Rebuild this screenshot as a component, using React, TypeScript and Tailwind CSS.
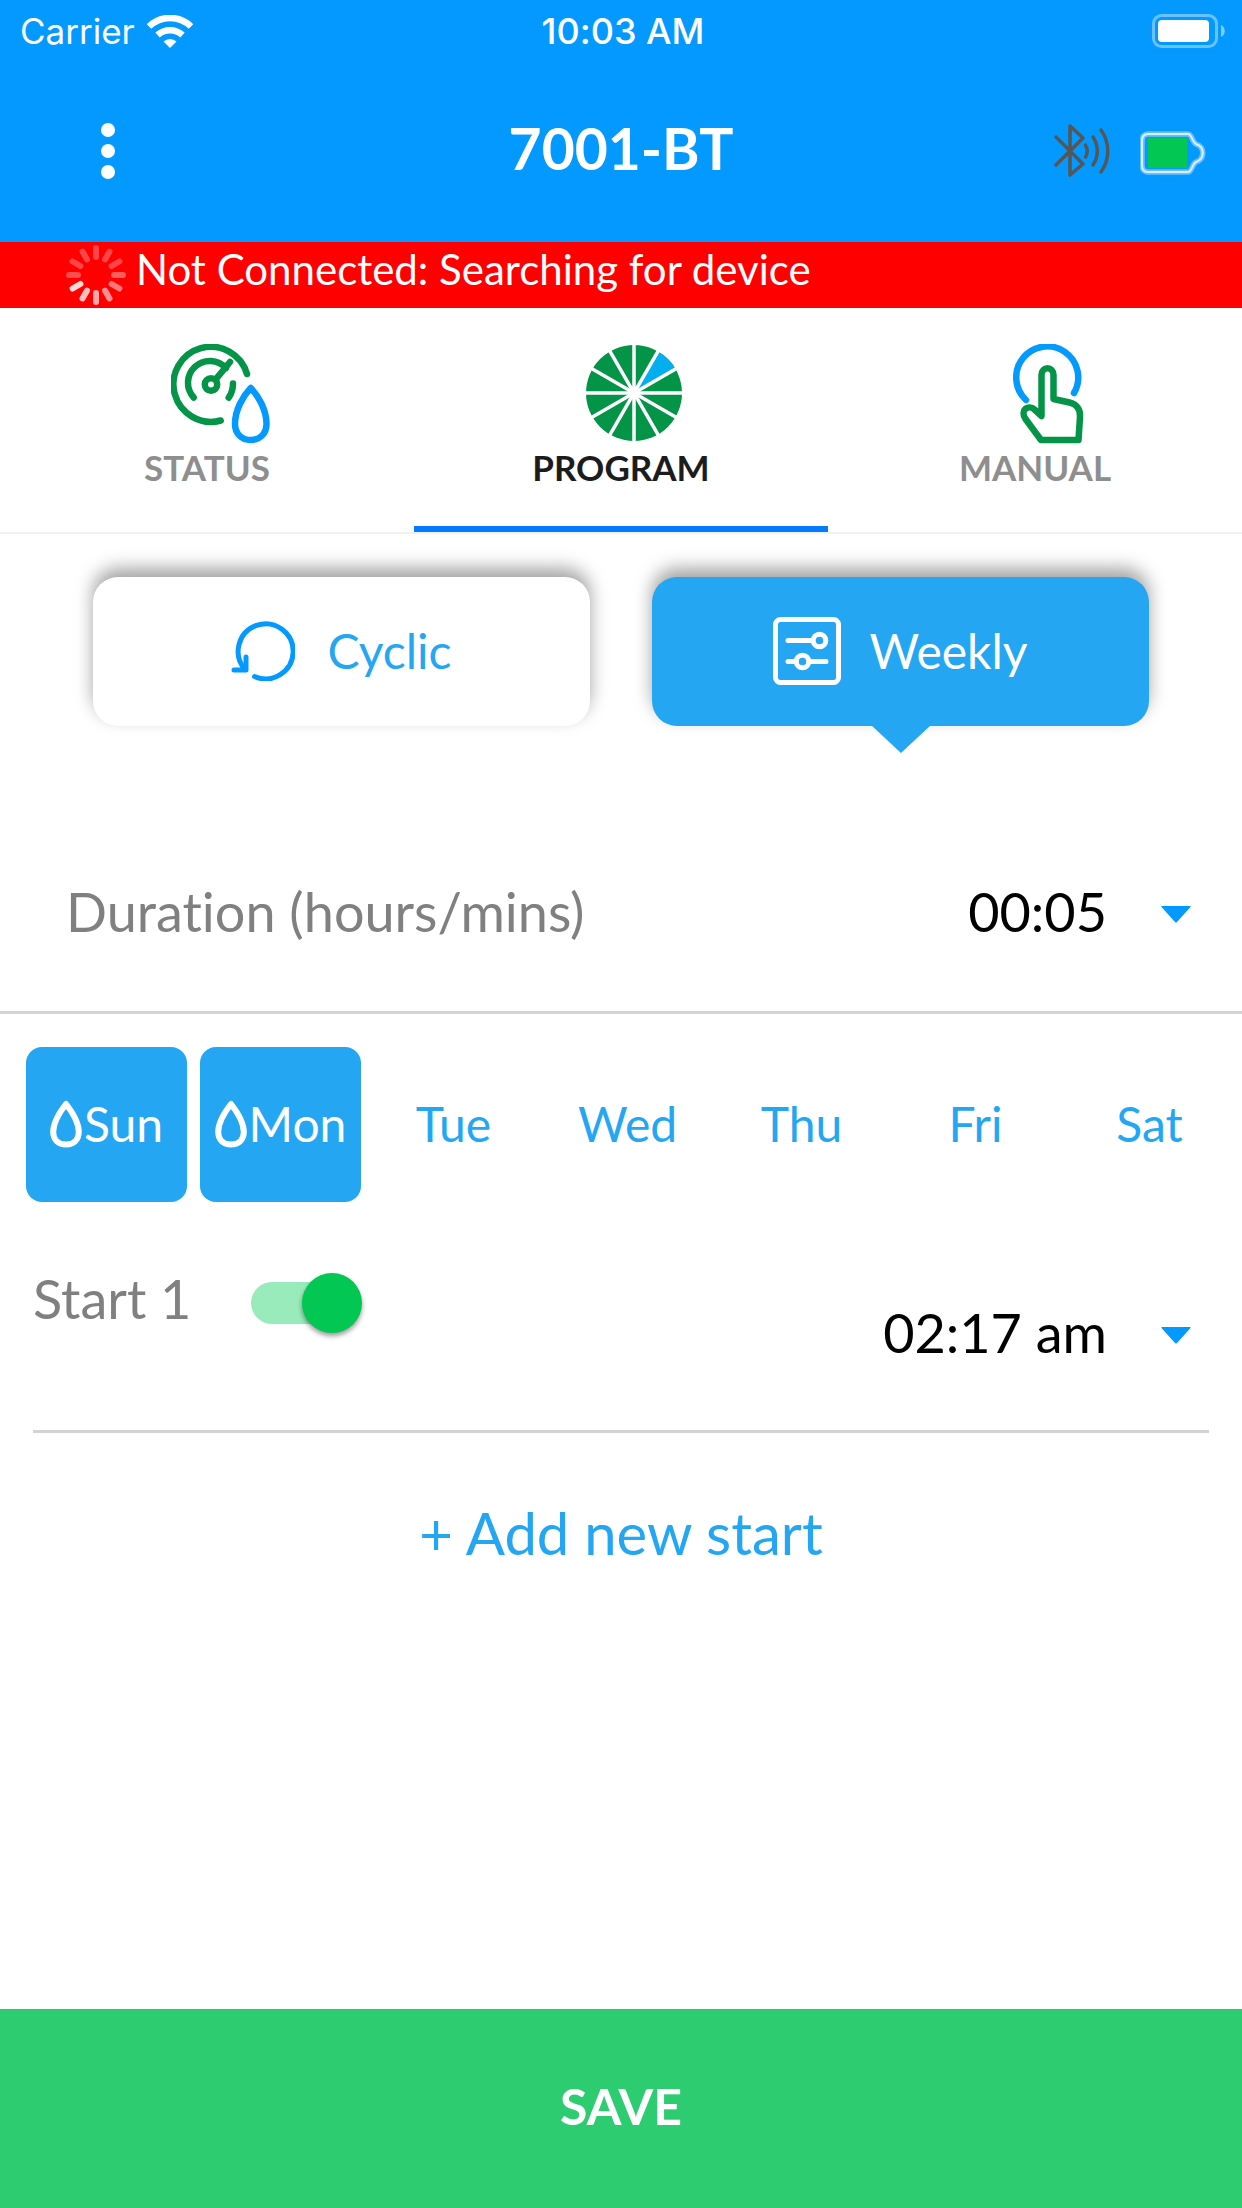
import { useState } from "react";
import type { ReactNode } from "react";

const WEEK = ["Sun", "Mon", "Tue", "Wed", "Thu", "Fri", "Sat"];

function WifiIcon() {
  return (
    <svg viewBox="0 0 46 33" className="h-[33px] w-[46px]" fill="none" stroke="#fff" aria-hidden="true">
      <path d="M2 11.5a30 30 0 0 1 42 0" strokeWidth="6.5" />
      <path d="M10.5 20a18.5 18.5 0 0 1 25 0" strokeWidth="6.5" />
      <path d="M16.500 26.500a9.500 9.500 0 0 1 13 0L23 33z" fill="#fff" stroke="none" />
    </svg>
  );
}

function PhoneBattery() {
  return (
    <svg viewBox="0 0 74 34" className="h-[34px] w-[74px]" aria-hidden="true">
      <rect x="1.500" y="1.500" width="63" height="31" rx="8" fill="none" stroke="#fff" strokeOpacity=".4" strokeWidth="3" />
      <rect x="6" y="6" width="51" height="22" rx="4" fill="#fff" />
      <path d="M69 11c5 2 5 10 0 12z" fill="#fff" fillOpacity=".5" />
    </svg>
  );
}

function BluetoothIcon() {
  return (
    <svg viewBox="0 0 58 54" className="h-[54px] w-[58px]" fill="none" stroke="#565656" strokeWidth="3.500" strokeLinecap="round" strokeLinejoin="round" aria-hidden="true">
      <path d="M2 13l27 27-13 11V2l13 12L2 41" />
      <path d="M31.500 21a12 12 0 0 1 0 12M39 13a25 25 0 0 1 0 28M47 6a36 36 0 0 1 0 42" />
    </svg>
  );
}

function DeviceBattery() {
  const shell =
    "M8 3h40c4 0 4 8 8 10 9 3 9 15 0 18-4 2-4 10-8 10H8c-4 0-6-3-6-7V10c0-4 2-7 6-7z";
  return (
    <svg viewBox="0 0 66 44" className="mt-1 h-[44px] w-[66px]" aria-hidden="true">
      <path d={shell} fill="none" stroke="#6bc0ff" strokeWidth="5.500" strokeLinejoin="round" />
      <path d={shell} fill="none" stroke="#d8efff" strokeWidth="2" strokeLinejoin="round" />
      <rect x="8" y="7" width="39" height="30" fill="#02c853" />
    </svg>
  );
}

const SPOKES = [0.27, 0.27, 0.27, 0.36, 0.47, 0.56, 0.66, 0.75, 0.85, 0.3, 0.27, 0.27];

function Spinner() {
  return (
    <svg viewBox="-30 -30 60 60" className="size-[60px]" stroke="#fff" strokeWidth="6" strokeLinecap="round" role="img" aria-label="Searching">
      {SPOKES.map((o, i) => (
        <line key={i} x1="0" y1="-27" x2="0" y2="-18" strokeOpacity={o} transform={`rotate(${i * 30})`} />
      ))}
    </svg>
  );
}

function StatusIcon() {
  return (
    <svg viewBox="0 0 100 100" className="size-[100px]" fill="none" stroke="#049447" strokeWidth="6.500" strokeLinecap="round" strokeLinejoin="round" aria-hidden="true">
      <path d="M76 30A37.500 37.500 0 1 0 49.700 76.500" />
      <path d="M22.700 53.500A21.500 21.500 0 0 1 55 24" />
      <path d="M62 39.500q0 8-4.300 14.200M45 35L59 18" />
      <circle cx="40" cy="40.500" r="6.200" />
      <path d="M79.700 44C72 52 64 66 64 80c0 10 7 16 15.700 16s15.800-6 15.800-16c0-14-8-28-15.800-36z" stroke="#0399ff" />
    </svg>
  );
}

function ProgramIcon() {
  return (
    <svg viewBox="-49 -49 100 100" className="size-[100px]" aria-hidden="true">
      <circle r="48" fill="#049447" />
      <path d="M0 0L24-41.570A48 48 0 0 1 41.570-24z" fill="#02aef0" />
      {[0, 30, 60, 90, 120, 150].map((a) => (
        <line key={a} x1="0" y1="-50" x2="0" y2="50" stroke="#fff" strokeWidth="3.500" transform={`rotate(${a})`} />
      ))}
      <circle r="6" fill="#fff" />
    </svg>
  );
}

function ManualIcon() {
  return (
    <svg viewBox="1 1 100 100" className="size-[100px]" fill="none" stroke="#049447" strokeWidth="6.500" strokeLinecap="round" strokeLinejoin="round" aria-hidden="true">
      <path d="M28 57A31 31 0 1 1 76 50" stroke="#0399ff" />
      <path d="M43.500 73V32c0-9 12-9 12 0v24l16 3.500c7 1.500 11 7 10.500 14L80.500 97H43L27.500 76c-6-9 3-15 9-9.500z" />
    </svg>
  );
}

function CyclicIcon() {
  return (
    <svg viewBox="0 0 64 60" className="h-[60px] w-[64px]" fill="none" stroke="#0399ff" strokeWidth="5" strokeLinecap="round" strokeLinejoin="round" aria-hidden="true">
      <path d="M23.500 55.500A27.500 27.500 0 1 0 14 48.500" />
      <path d="M3 49h12V36" />
    </svg>
  );
}

function WeeklyIcon() {
  return (
    <svg viewBox="0 0 68 68" className="size-[68px]" fill="none" stroke="#fff" strokeWidth="5" strokeLinecap="round" aria-hidden="true">
      <rect x="2.500" y="2.500" width="63" height="63" rx="5" />
      <path d="M15 23.500h24M15 44.500h8M36 44.500h17" />
      <circle cx="46.500" cy="23.500" r="6.300" />
      <circle cx="29.500" cy="44.500" r="6.300" />
    </svg>
  );
}

function DropIcon() {
  return (
    <svg viewBox="0 0 32 48" className="h-[48px] w-[32px]" fill="none" stroke="#fff" strokeWidth="6" strokeLinejoin="round" aria-hidden="true">
      <path d="M16 4C9 13 3.200 22 3.200 32c0 8 5.500 12.500 12.800 12.500S28.800 40 28.800 32C28.800 22 23 13 16 4z" />
    </svg>
  );
}

function Tab({ icon, label, active }: { icon: ReactNode; label: string; active?: boolean }) {
  return (
    <button
      type="button"
      role="tab"
      aria-selected={!!active}
      className={`flex h-[224px] flex-col items-center border-b-[6px] pt-9 ${active ? "border-[#037aff] text-[#1c1c1e]" : "border-transparent text-[#8e8e8e]"}`}
    >
      <span className="ml-7">{icon}</span>
      <span className="text-[35px] leading-[46px] font-bold">{label}</span>
    </button>
  );
}

function Picker({ label, value }: { label: string; value: string }) {
  return (
    <span className="relative flex items-center">
      <select aria-label={label} defaultValue={value} className="field-sizing-content appearance-none bg-transparent pr-[84px] pb-1 text-right text-[54px] leading-[64px] text-black">
        <option>{value}</option>
      </select>
      <svg viewBox="0 0 30 17" className="pointer-events-none absolute right-0 h-[17px] w-[30px]" aria-hidden="true">
        <path d="M1 0h28q1 0 .5 1L16 16q-1 1-2 0L.5 1Q0 0 1 0z" fill="#0399ff" />
      </svg>
    </span>
  );
}

export default function App() {
  const [days, setDays] = useState(["Sun", "Mon"]);
  const [on, setOn] = useState(true);
  const toggle = (d: string) => setDays((p) => (p.includes(d) ? p.filter((x) => x !== d) : [...p, d]));

  return (
    <div className="flex min-h-screen flex-col bg-white font-['Lato',sans-serif] [font-variant-ligatures:none]">
      <header className="bg-[#0399ff] text-white">
        <div className="grid h-[60px] grid-cols-3 items-center pt-[2px] pr-4 pl-5 font-['Inter',sans-serif] text-[36px]">
          <div className="flex items-center gap-3">
            <span className="text-[35px]">Carrier</span>
            <WifiIcon />
          </div>
          <span className="text-center font-medium">10:03 AM</span>
          <div className="flex justify-end">
            <PhoneBattery />
          </div>
        </div>
        <div className="grid h-[182px] grid-cols-3 items-center px-9">
          <button type="button" aria-label="Menu" className="ml-14 flex w-8 flex-col items-center gap-[7px]">
            <span className="size-[14px] rounded-full bg-white" />
            <span className="size-[14px] rounded-full bg-white" />
            <span className="size-[14px] rounded-full bg-white" />
          </button>
          <h1 className="pb-1 text-center text-[57px] font-bold">7001-BT</h1>
          <div className="flex items-center justify-end gap-7">
            <BluetoothIcon />
            <DeviceBattery />
          </div>
        </div>
      </header>

      <div role="status" className="flex h-[66px] items-center gap-[10px] bg-[#ff0000] pl-[66px] text-white">
        <Spinner />
        <span className="pb-3 text-[42px] leading-[48px]">Not Connected: Searching for device</span>
      </div>

      <div role="tablist" className="grid grid-cols-3 border-b-2 border-[#f1f1f1]">
        <Tab icon={<StatusIcon />} label="STATUS" />
        <Tab icon={<ProgramIcon />} label="PROGRAM" active />
        <Tab icon={<ManualIcon />} label="MANUAL" />
      </div>

      <main className="flex flex-1 flex-col">
        <div className="grid grid-cols-2 gap-[62px] px-[93px] pt-[43px] text-[48px]">
          <button type="button" aria-pressed="false" className="flex h-[149px] items-center justify-center gap-8 rounded-[25px] bg-white pb-[2px] text-[#24a6f2] shadow-[0_-9px_18px_rgba(0,0,0,0.36)]">
            <CyclicIcon />
            Cyclic
          </button>
          <button type="button" aria-pressed="true" className="relative flex h-[149px] items-center justify-center gap-7 rounded-[25px] bg-[#24a6f2] pb-[2px] text-white shadow-[0_-9px_18px_rgba(0,0,0,0.36)]">
            <WeeklyIcon />
            Weekly
            <svg viewBox="0 0 60 28" className="absolute top-full left-1/2 -mt-px h-[28px] w-[60px] -translate-x-1/2" aria-hidden="true">
              <path d="M0 0h60L30 28z" fill="#24a6f2" />
            </svg>
          </button>
        </div>

        <div className="mt-[89px] flex h-[199px] items-center justify-between border-b-[3px] border-[#d3d3d3] pt-[2px] pr-[51px] pl-[66px]">
          <span className="pb-1 text-[54px] leading-[64px] text-[#808080]">Duration (hours/mins)</span>
          <Picker label="Duration" value="00:05" />
        </div>

        <div className="mt-[33px] grid grid-cols-7 gap-[13px] pr-[11px] pl-[26px] text-[48px]">
          {WEEK.map((d) => {
            const picked = days.includes(d);
            return (
              <button
                key={d}
                type="button"
                aria-pressed={picked}
                onClick={() => toggle(d)}
                className={`flex h-[155px] items-center justify-center gap-[2px] rounded-2xl pb-[2px] ${picked ? "bg-[#24a6f2] text-white" : "pr-[2px] text-[#24a6f2]"}`}
              >
                {picked && <DropIcon />}
                {d}
              </button>
            );
          })}
        </div>

        <div className="mx-[33px] flex h-[231px] justify-between border-b-[3px] border-[#d3d3d3] pt-[65px] pr-[18px]">
          <label className="flex h-[72px] items-center text-[54px] text-[#808080]">
            <span className="w-[218px] pb-2 leading-[64px]">Start 1</span>
            <input
              type="checkbox"
              role="switch"
              checked={on}
              onChange={() => setOn(!on)}
              className="relative h-[42px] w-[110px] appearance-none rounded-full bg-gray-300 before:absolute before:-top-[9px] before:left-0 before:size-[60px] before:rounded-full before:bg-white before:shadow-[0_3px_5px_rgba(0,0,0,0.4)] checked:bg-[#9aebbb] checked:before:left-[51px] checked:before:bg-[#02c853]"
            />
          </label>
          <div className="flex items-start pt-[34px]">
            <Picker label="Start 1 time" value="02:17 am" />
          </div>
        </div>

        <button type="button" className="mx-auto mt-[66px] text-[58px] leading-[68px] text-[#24a6f2]">
          + Add new start
        </button>
      </main>

      <button type="button" className="h-[199px] bg-[#2ecc71] pb-1 text-[50px] font-bold text-white">
        SAVE
      </button>
    </div>
  );
}
